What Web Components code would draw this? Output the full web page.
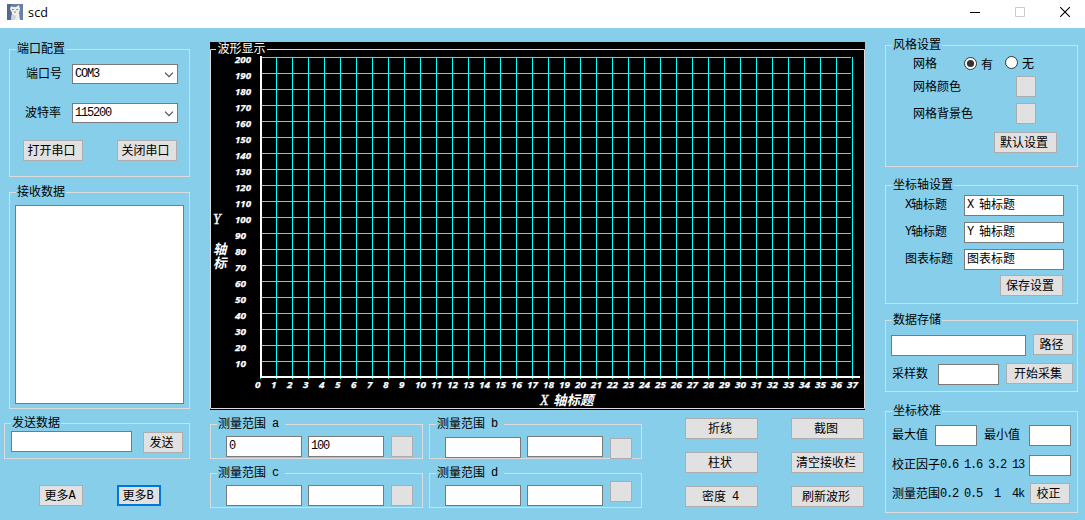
<!DOCTYPE html>
<html lang="zh">
<head>
<meta charset="utf-8">
<title>scd</title>
<style>
html, body {
    margin: 0;
    height: 520px;
    overflow: hidden;
    background: #87ceeb;
}
</style>
</head>
<body>
<scd-window></scd-window>

<script>
// shared by every control: CJK at 12px, latin squeezed to a half-width cell
const baseStyle = `
*{ box-sizing: border-box; }
:host{
    display: block;
    box-sizing: border-box;
    flex: none;
    font: 12px/14px "Noto Sans CJK SC", sans-serif;
    color: #000;
    white-space: pre;
}
.en{
    font-family: "Liberation Mono", monospace;
    letter-spacing: -1.2px;
    line-height: 0;
    vertical-align: 1px;
}
`;

function mixed(text) {
    return (text || '').replace(/[\x20-\x7e]+/g, run => `<span class="en">${run}</span>`);
}

class BaseElement extends HTMLElement {
    connectedCallback() {
        if (this.shadowRoot) return;
        const root = this.attachShadow({ mode: 'open' });
        root.innerHTML = `<style>${baseStyle}${this.css()}</style>${this.html()}`;
    }
    css() { return ''; }
    html() { return '<slot></slot>'; }
    attr(name) { return this.getAttribute(name) || ''; }
}

class UiLabel extends BaseElement {
    css() { return ':host{ padding-top: 1px; }'; }
    html() { return mixed(this.attr('text')); }
}

class UiButton extends BaseElement {
    css() {
        return `
:host{
    height: 21px;
    background: #e1e1e1;
    border: 1px solid #adadad;
    text-align: center;
    padding: 2px 3px 0 0;
    width: 60px;
}
:host([focused]){
    border: 2px solid #0078d7;
    padding: 1px 3px 0 0;
}`;
    }
    html() { return mixed(this.attr('text')); }
}

class UiInput extends BaseElement {
    css() {
        return `
:host{
    height: 21px;
    background: #fff;
    border: 1px solid #7a7a7a;
    padding: 1px 0 0 2px;
}`;
    }
    html() { return mixed(this.attr('value')); }
}

class UiCombo extends BaseElement {
    css() {
        return `
:host{
    display: flex;
    justify-content: space-between;
    width: 106px;
    height: 20px;
    background: #fff;
    border: 1px solid #7a7a7a;
    padding: 1px 3px 0 2px;
}
svg{ margin-top: 6px; }`;
    }
    html() {
        return `<div>${mixed(this.attr('value'))}</div><svg width="10" height="6"><path d="M1 .7 5 4.7 9 .7" fill="none" stroke="#505050" stroke-width="1.2"/></svg>`;
    }
}

class UiRadio extends BaseElement {
    css() {
        return `
:host{ display: flex; gap: 4px; }
svg{ display: block; }`;
    }
    html() {
        const dot = this.hasAttribute('checked') ? '<circle cx="6.5" cy="6.5" r="3.6" fill="#333"/>' : '';
        return `<svg width="13" height="13"><circle cx="6.5" cy="6.5" r="6" fill="#fff" stroke="#333"/>${dot}</svg><div>${mixed(this.attr('text'))}</div>`;
    }
}

class UiGroup extends BaseElement {
    css() {
        return `
fieldset{
    height: 100%;
    margin: 0;
    padding: 0;
    border: 1px solid #dcdcdc;
    min-width: 0;
    white-space: normal;
}
legend{
    height: 15px;
    line-height: 11px;
    margin-left: 6px;
    padding: 0 var(--legend-pad, 1px) 0 1px;
    white-space: pre;
}`;
    }
    html() {
        return `<fieldset><legend>${mixed(this.attr('label'))}</legend><slot></slot></fieldset>`;
    }
}

class WaveChart extends BaseElement {
    css() {
        return `
:host{ width: 655px; height: 368px; background: #000; }
svg{ display: block; overflow: visible; }
text{ fill: #fff; }
.num{ font: italic bold 9px "Open Sans", sans-serif; stroke: #fff; stroke-width: .25px; }
.title{ font: bold 13.5px "Noto Sans CJK SC", sans-serif; }
.letter{ font: italic 14px "Liberation Serif", serif; stroke: #fff; stroke-width: .3px; }`;
    }
    html() {
        let lines = '';
        let nums = '';
        for (let i = 0; i < 20; i++) {
            const y = 15 + i * 16;
            const n = 200 - i * 10;
            lines += `M52 ${y}.5H641`;
            nums += `<text class="num" x="25" y="${y + 6}" textLength="${n > 99 ? 16 : 11}" lengthAdjust="spacingAndGlyphs">${n}</text>`;
        }
        for (let i = 0; i <= 37; i++) {
            const x = 50 + i * 16;
            lines += `M${x}.5 ${i ? 15 : 336}V337`;
            nums += `<text class="num" x="${x - 5}" y="346" textLength="${i > 9 ? 11 : 5.5}" lengthAdjust="spacingAndGlyphs">${i}</text>`;
        }
        return `<svg width="655" height="368">
<path d="M6 7.5H.5V366.5H654.5V7.5H57" fill="none" stroke="#dcdcdc"/>
<text x="7.5" y="11" font-size="12">波形显示</text>
<path d="${lines}" stroke="#0ff" fill="none" shape-rendering="crispEdges"/>
<path d="M51 14V335H650" fill="none" stroke="#fff" stroke-width="2"/>
${nums}
<text class="letter" x="330" y="363">X</text>
<text class="title" transform="translate(343 363) skewX(-14)">轴标题</text>
<text class="letter" x="3" y="182">Y</text>
<text class="title" transform="translate(3 212) skewX(-14)">轴</text>
<text class="title" transform="translate(3 226) skewX(-14)">标</text>
</svg>`;
    }
}

class TitleBar extends BaseElement {
    css() {
        return `
:host{
    display: flex;
    height: 28px;
    background: #fff;
    padding: 4px 15px 0 7px;
    font: 12.5px/17px "Open Sans", sans-serif;
}
.name{ margin-left: 5px; flex: 1; letter-spacing: .2px; }
.ctl{ display: flex; gap: 35px; padding-top: 3px; }`;
    }
    html() {
        return `
<svg width="16" height="16"><path d="M0 0H16V16H0z" fill="#697fa3"/><path d="M0 0H5V16H0z" fill="#53698d"/><path d="M4 2 6 3 9 3 12 1 13 5 12 9 13 16H4L5 9 3 5z" fill="#eeeeec"/><path d="M5 10 9 12 8 16H4z" fill="#d2d3d5"/><path d="M5.3 5h1.3v1H5.3zM9.5 5h1.3v1H9.5zM7.3 7.5h1.4v1H7.3z" fill="#55545c"/></svg>
<div class="name">${this.attr('text')}</div>
<div class="ctl">
<svg width="10" height="10"><path d="M0 5.5H10" stroke="#000"/></svg>
<svg width="10" height="10"><path d="M.5 .5H9.5V9.5H.5z" fill="none" stroke="#ccc"/></svg>
<svg width="10" height="10"><path d="M0 0 10 10M10 0 0 10" stroke="#000" stroke-width="1.1"/></svg>
</div>`.replace(/>\n</g, '><');
    }
}

const windowTemplate = document.createElement('template');
windowTemplate.innerHTML = `
<style>
:host{
    display: block;
    width: 1085px;
    height: 520px;
    background: #87ceeb;
}
main{ display: flex; height: 492px; }
.left{ width: 186px; margin-left: 4px; padding-top: 14px; }
.center{ width: 655px; margin-left: 20px; padding-top: 14px; }
.right{ width: 193px; margin-left: 20px; padding-top: 10px; }
.row{ display: flex; align-items: flex-start; }
.lower{ display: flex; margin-top: 7px; }
.ranges{
    display: grid;
    grid-template-columns: 213px 213px;
    grid-auto-rows: 42px;
    gap: 7px 6px;
    --legend-pad: 7px;
}
.ranges .row{ padding-left: 15px; }
.ranges ui-input{ width: 76px; margin: 4px 6px 0 0; }
.ranges ui-button{ width: 22px; margin: 4px 0 0 1px; }
.actions{
    display: grid;
    grid-template-columns: 73px 73px;
    align-content: start;
    gap: 13px 33px;
    margin: 1px 0 0 43px;
}
.actions ui-button{ width: 73px; }
.axis{ padding-left: 19px; margin-bottom: 6px; }
.axis ui-label{ width: 59px; margin-top: 1px; }
.axis ui-input{ width: 100px; }
</style>
<title-bar text="scd"></title-bar>
<main>
    <div class="left">
        <ui-group label="端口配置" style="margin-left:5px;height:135px">
            <div class="row" style="padding:7px 0 0 16px">
                <ui-label text="端口号" style="width:46px;margin-top:1px"></ui-label>
                <ui-combo value="COM3"></ui-combo>
            </div>
            <div class="row" style="padding:19px 0 0 15px">
                <ui-label text="波特率" style="width:47px;margin-top:1px"></ui-label>
                <ui-combo value="115200"></ui-combo>
            </div>
            <div class="row" style="padding:17px 0 0 13px;gap:34px">
                <ui-button text="打开串口"></ui-button>
                <ui-button text="关闭串口"></ui-button>
            </div>
        </ui-group>
        <ui-group label="接收数据" style="margin:8px 0 0 5px;height:224px">
            <div class="row" style="padding:5px 0 0 5px">
                <ui-input style="width:169px;height:199px"></ui-input>
            </div>
        </ui-group>
        <ui-group label="发送数据" style="margin-top:7px;height:43px">
            <div class="row" style="padding-left:6px;gap:11px">
                <ui-input style="width:121px"></ui-input>
                <ui-button text="发送" style="width:40px;margin-top:1px"></ui-button>
            </div>
        </ui-group>
        <div class="row" style="padding:26px 0 0 35px;gap:34px">
            <ui-button text="更多A" style="width:44px"></ui-button>
            <ui-button text="更多B" focused style="width:44px"></ui-button>
        </div>
    </div>

    <div class="center">
        <wave-chart></wave-chart>
        <div class="lower">
            <div class="ranges">
                <ui-group label="测量范围 a">
                    <div class="row">
                        <ui-input value="0"></ui-input>
                        <ui-input value="100"></ui-input>
                        <ui-button></ui-button>
                    </div>
                </ui-group>
                <ui-group label="测量范围 b">
                    <div class="row">
                        <ui-input style="margin-top:5px"></ui-input>
                        <ui-input></ui-input>
                        <ui-button style="margin-top:6px"></ui-button>
                    </div>
                </ui-group>
                <ui-group label="测量范围 c">
                    <div class="row">
                        <ui-input></ui-input>
                        <ui-input></ui-input>
                        <ui-button></ui-button>
                    </div>
                </ui-group>
                <ui-group label="测量范围 d">
                    <div class="row">
                        <ui-input></ui-input>
                        <ui-input></ui-input>
                        <ui-button style="margin-top:0"></ui-button>
                    </div>
                </ui-group>
            </div>
            <div class="actions">
                <ui-button text="折线"></ui-button>
                <ui-button text="截图"></ui-button>
                <ui-button text="柱状"></ui-button>
                <ui-button text="清空接收栏"></ui-button>
                <ui-button text="密度 4"></ui-button>
                <ui-button text="刷新波形"></ui-button>
            </div>
        </div>
    </div>

    <div class="right">
        <ui-group label="风格设置" style="height:129px">
            <div class="row" style="height:23px;padding-left:27px">
                <ui-label text="网格" style="width:51px;margin-top:2px"></ui-label>
                <ui-radio text="有" checked style="width:41px;margin-top:4px"></ui-radio>
                <ui-radio text="无" style="margin-top:3px"></ui-radio>
            </div>
            <div class="row" style="height:27px;padding-left:27px">
                <ui-label text="网格颜色" style="width:103px;margin-top:2px"></ui-label>
                <ui-button style="width:20px"></ui-button>
            </div>
            <div class="row" style="height:29px;padding-left:27px">
                <ui-label text="网格背景色" style="width:103px;margin-top:2px"></ui-label>
                <ui-button style="width:20px"></ui-button>
            </div>
            <div class="row" style="padding-left:108px">
                <ui-button text="默认设置" style="width:63px"></ui-button>
            </div>
        </ui-group>
        <ui-group label="坐标轴设置" style="margin-top:11px;height:126px">
            <div class="row axis" style="padding-top:2px">
                <ui-label text="X轴标题"></ui-label>
                <ui-input value="X 轴标题"></ui-input>
            </div>
            <div class="row axis">
                <ui-label text="Y轴标题"></ui-label>
                <ui-input value="Y 轴标题"></ui-input>
            </div>
            <div class="row axis" style="margin-bottom:5px">
                <ui-label text="图表标题"></ui-label>
                <ui-input value="图表标题"></ui-input>
            </div>
            <div class="row" style="padding-left:114px">
                <ui-button text="保存设置" style="width:63px"></ui-button>
            </div>
        </ui-group>
        <ui-group label="数据存储" style="margin-top:9px;height:79px">
            <div class="row" style="padding:6px 0 0 5px;gap:7px">
                <ui-input style="width:135px;margin-top:1px"></ui-input>
                <ui-button text="路径" style="width:40px"></ui-button>
            </div>
            <div class="row" style="padding:7px 0 0 6px">
                <ui-label text="采样数" style="width:46px;margin-top:2px"></ui-label>
                <ui-input style="width:61px;margin:1px 7px 0 0"></ui-input>
                <ui-button text="开始采集" style="width:67px"></ui-button>
            </div>
        </ui-group>
        <ui-group label="坐标校准" style="margin-top:12px;height:109px">
            <div class="row" style="padding:6px 0 0 6px">
                <ui-label text="最大值" style="width:43px;margin-top:1px"></ui-label>
                <ui-input style="width:42px;margin-right:7px"></ui-input>
                <ui-label text="最小值" style="width:45px;margin-top:1px"></ui-label>
                <ui-input style="width:42px"></ui-input>
            </div>
            <div class="row" style="padding:9px 0 0 6px">
                <ui-label text="校正因子0.6 1.6 3.2 13" style="width:137px;margin-top:1px"></ui-label>
                <ui-input style="width:42px"></ui-input>
            </div>
            <div class="row" style="padding:7px 0 0 6px">
                <ui-label text="测量范围0.2 0.5  1  4k" style="width:138px;margin-top:2px"></ui-label>
                <ui-button text="校正" style="width:40px"></ui-button>
            </div>
        </ui-group>
    </div>
</main>
`;

class ScdWindow extends HTMLElement {
    constructor() {
        super();
        const shadowRoot = this.attachShadow({ mode: 'open' });
        shadowRoot.appendChild(windowTemplate.content.cloneNode(true));
    }
}

customElements.define('ui-label', UiLabel);
customElements.define('ui-button', UiButton);
customElements.define('ui-input', UiInput);
customElements.define('ui-combo', UiCombo);
customElements.define('ui-radio', UiRadio);
customElements.define('ui-group', UiGroup);
customElements.define('wave-chart', WaveChart);
customElements.define('title-bar', TitleBar);
customElements.define('scd-window', ScdWindow);
</script>
</body>
</html>
